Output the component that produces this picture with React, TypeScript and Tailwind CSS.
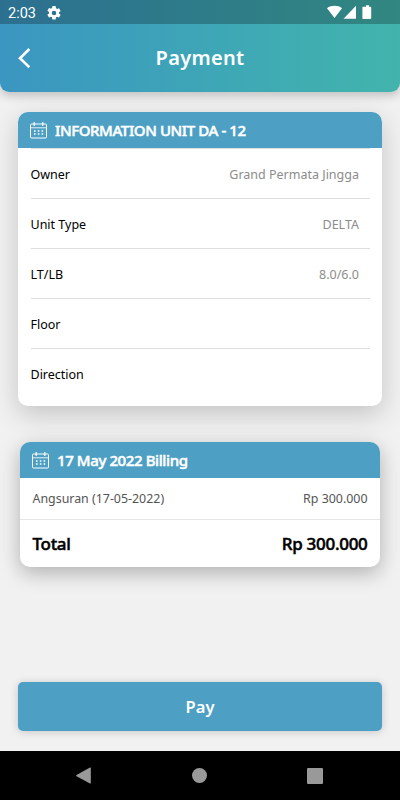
interface InfoRow {
    label: string;
    value?: string;
}

const unitInfo: InfoRow[] = [
    { label: "Owner", value: "Grand Permata Jingga" },
    { label: "Unit Type", value: "DELTA" },
    { label: "LT/LB", value: "8.0/6.0" },
    { label: "Floor" },
    { label: "Direction" },
];

function CalendarIcon() {
    return (
        <svg width="17" height="17" viewBox="0 0 17 17" fill="none" stroke="white" strokeWidth="1" className="shrink-0">
            <rect x="0.5" y="2" width="16" height="14" rx="1" />
            <path d="M0.5 5.8h16" strokeOpacity="0.85" />
            <path d="M4.2 0v4M12.8 0v4" strokeWidth="1.2" />
            <path d="M4 9h10M4 12h10" strokeWidth="1.4" strokeDasharray="1.6 2.2" />
        </svg>
    );
}

function StatusBar() {
    return (
        <div className="flex h-6 items-center bg-black/25 pr-7 pl-2 text-white">
            <span className="pt-[3px] font-['Roboto',sans-serif] text-[14.5px] leading-[21px]">2:03</span>
            <svg width="14" height="14" viewBox="2 2 20 20" fill="white" className="mt-px ml-[11px]">
                <path d="M19.14 12.94c.04-.3.06-.61.06-.94s-.02-.64-.07-.94l2.03-1.58a.49.49 0 0 0 .12-.61l-1.92-3.32a.49.49 0 0 0-.59-.22l-2.39.96a7 7 0 0 0-1.62-.94l-.36-2.54A.48.48 0 0 0 13.92 2h-3.84a.48.48 0 0 0-.47.41l-.36 2.54a7 7 0 0 0-1.62.94l-2.39-.96a.49.49 0 0 0-.59.22L2.74 8.47a.48.48 0 0 0 .12.61l2.03 1.58c-.05.3-.09.63-.09.94s.02.64.07.94l-2.03 1.58a.49.49 0 0 0-.12.61l1.92 3.32c.12.22.37.29.59.22l2.39-.96c.5.38 1.03.7 1.62.94l.36 2.54c.05.24.24.41.48.41h3.84c.24 0 .44-.17.47-.41l.36-2.54a7 7 0 0 0 1.62-.94l2.39.96c.22.08.47 0 .59-.22l1.92-3.32a.48.48 0 0 0-.12-.61zM12 15.2a3.2 3.2 0 1 1 0-6.4 3.2 3.2 0 0 1 0 6.4z" />
            </svg>
            <svg width="46" height="14" viewBox="0 0 46 14" fill="white" className="ml-auto">
                <path d="M1 3.2C5 0 12 0 16 3.2L8.5 13z" />
                <path d="M30 0.8v13H17.5z" />
                <path d="M38 1.8h2V0.3h3v1.5h1.4q.8 0 .8.8v10.6q0 .8-.8.8H37.2q-.8 0-.8-.8V2.6q0-.8.8-.8z" />
            </svg>
        </div>
    );
}

function Header() {
    return (
        <header className="relative h-[91.5px] overflow-hidden rounded-b-[9px] bg-linear-to-r from-[#3b96c1] to-[#42b4ac] shadow-[0_4px_10px_rgba(0,0,0,0.2)]">
            <StatusBar />
            <div className="grid h-[67px] grid-cols-[1fr_auto_1fr] items-center px-[18px] text-white">
                <button type="button" aria-label="Back" className="w-fit">
                    <svg width="14" height="20" viewBox="0 0 14 20" fill="none" stroke="white" strokeWidth="2.6">
                        <path d="M11.3 1L2 10.3l9.3 8.9" />
                    </svg>
                </button>
                <h1 className="pt-px text-[20px] leading-6 font-semibold tracking-[0.3px]">Payment</h1>
            </div>
        </header>
    );
}

function CardTitle({ title }: { title: string }) {
    return (
        <div className="flex h-9 items-center gap-2 bg-[#4d9fc4] px-3">
            <CalendarIcon />
            <h2 className="pt-px text-[15px] font-medium tracking-[-0.4px] text-white [-webkit-text-stroke:0.5px_white]">
                {title}
            </h2>
        </div>
    );
}

export default function App() {
    return (
        <div className="flex h-[800px] w-full flex-col overflow-hidden bg-[#f1f1f1] font-['Noto_Sans',sans-serif]">
            <Header />

            <main className="flex flex-1 flex-col px-[18px] pt-[20.5px] pb-5">
                {/* Unit information */}
                <section className="h-[293.5px] overflow-hidden rounded-[10px] bg-white shadow-[0_8px_26px_rgba(0,0,0,0.19)]">
                    <CardTitle title="INFORMATION UNIT DA - 12" />
                    <div className="mx-[12.5px]">
                        {unitInfo.map((row) => (
                            <div
                                key={row.label}
                                className="flex h-[50px] items-center justify-between border-t border-[#dedede] pt-[3px] pr-[10.5px] text-[12.5px]"
                            >
                                <span className="text-black">{row.label}</span>
                                <span className="text-[#8c8c8c]">{row.value}</span>
                            </div>
                        ))}
                    </div>
                </section>

                {/* Billing */}
                <section className="mx-[2px] mt-[36.5px] h-[125px] overflow-hidden rounded-[10px] bg-white shadow-[0_6px_20px_rgba(0,0,0,0.27)]">
                    <CardTitle title="17 May 2022 Billing" />
                    <div className="flex h-[41px] items-center justify-between px-[12.5px] pt-[2px] text-[12.4px] text-[#555]">
                        <span>Angsuran (17-05-2022)</span>
                        <span>Rp 300.000</span>
                    </div>
                    <div className="flex h-12 items-center justify-between border-t border-[#e5e5e5] px-[12.5px] text-[17px] font-medium tracking-[-0.3px] text-black [-webkit-text-stroke:0.5px_black]">
                        <span>Total</span>
                        <span>Rp 300.000</span>
                    </div>
                </section>

                <button
                    type="button"
                    className="mt-auto h-[49px] rounded-[5px] bg-[#4d9fc4] pt-[2px] text-[16.5px] font-semibold text-white shadow-[0_1px_8px_rgba(0,0,0,0.18)]"
                >
                    Pay
                </button>
            </main>

            {/* System navigation */}
            <nav className="flex h-[49px] items-center justify-between bg-black pr-[77px] pl-[76px]">
                <svg width="15" height="17" viewBox="0 0 15 17" fill="#999">
                    <path d="M14 .5q.8-.3.8.6v14.8q0 .9-.8.6L.5 9.2q-.7-.6 0-1.2z" />
                </svg>
                <span className="size-[15px] rounded-full bg-[#999]" />
                <span className="size-4 rounded-[1px] bg-[#999]" />
            </nav>
        </div>
    );
}
